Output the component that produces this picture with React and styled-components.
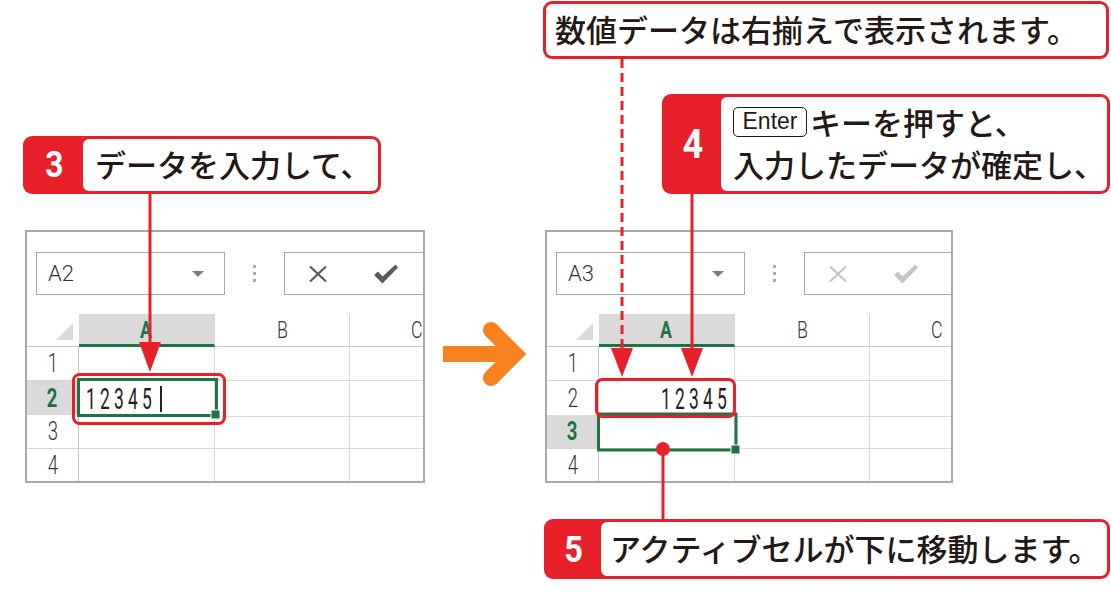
import React from 'react';
import styled, { createGlobalStyle } from 'styled-components';

const RED = '#e8202a';
const GREEN = '#217346';
const INK = '#231815';
const ORANGE = '#f5821f';

const Global = createGlobalStyle`
  html, body { margin: 0; padding: 0; background: #fff; }
  body { font-family: "Noto Sans CJK JP", "Noto Sans", sans-serif; }
`;

const Page = styled.div`
  position: relative;
  width: 1111px;
  height: 601px;
  display: flex;
  overflow: hidden;
  background: #fff;
`;

const LeftCol = styled.div`
  width: 430px;
  flex: none;
  box-sizing: border-box;
  padding: 136px 0 0 23px;
  display: flex;
  flex-direction: column;
  align-items: flex-start;
`;

const ArrowCol = styled.div`
  width: 113px;
  flex: none;
  box-sizing: border-box;
  padding: 322px 0 0 13px;
`;

const RightCol = styled.div`
  width: 568px;
  flex: none;
  box-sizing: border-box;
  padding-top: 1px;
  display: flex;
  flex-direction: column;
  align-items: flex-start;
`;

/* ---------- callouts ---------- */
const Callout = styled.div`
  display: flex;
  align-items: stretch;
  box-sizing: border-box;
  width: ${(p) => p.$w}px;
  height: ${(p) => p.$h}px;
  margin-left: ${(p) => p.$ml || 0}px;
  margin-top: ${(p) => p.$mt || 0}px;
  padding: 3px;
  background: ${RED};
  border-radius: 9px;
  flex: none;
`;

const StepNum = styled.div`
  width: ${(p) => p.$w}px;
  flex: none;
  display: flex;
  align-items: center;
  justify-content: center;
  color: #fff;
  font-family: Roboto, "Liberation Sans", sans-serif;
  font-weight: 700;
  font-size: ${(p) => p.$size}px;
  line-height: 1;
  & > span {
    display: inline-block;
    transform: scaleX(0.88);
  }
`;

const CalloutBody = styled.div`
  flex: 1;
  background: #fff;
  border-radius: 6px;
  display: flex;
  flex-direction: column;
  justify-content: center;
  box-sizing: border-box;
  padding-left: ${(p) => p.$pl}px;
  font-family: "Noto Sans CJK JP", "Noto Sans", sans-serif;
  font-size: 31px;
  font-weight: 500;
  color: ${INK};
  line-height: 42px;
  white-space: nowrap;
  padding-bottom: 2px;
`;

const Line = styled.div`
  display: flex;
  align-items: center;
  height: 42px;
`;

const KeyCap = styled.span`
  display: inline-flex;
  align-items: center;
  justify-content: center;
  box-sizing: border-box;
  width: 74px;
  height: 30px;
  border: 1.5px solid ${INK};
  border-radius: 5px;
  font-family: "Liberation Sans", Arial, sans-serif;
  font-weight: 400;
  font-size: 23px;
  line-height: 1;
  margin-right: 3px;
  padding-bottom: 1px;
`;

/* ---------- spreadsheet ---------- */
const Sheet = styled.div`
  position: relative;
  flex: none;
  box-sizing: border-box;
  width: ${(p) => p.$w}px;
  height: 253px;
  margin-top: 36px;
  margin-left: ${(p) => p.$ml}px;
  border: 2px solid #a8a8a8;
  overflow: hidden;
  background: #fff;
  font-family: Roboto, "Noto Sans", sans-serif;
  font-weight: 300;
  color: #222;
`;

const FormulaBar = styled.div`
  height: 82px;
  box-sizing: border-box;
  padding: 20px 0 0 9px;
  display: flex;
  align-items: flex-start;
`;

const NameBox = styled.div`
  width: 189px;
  height: 43px;
  flex: none;
  box-sizing: border-box;
  border: 1.5px solid #a8a8a8;
  display: flex;
  align-items: center;
  justify-content: space-between;
  padding: 0 20px 0 11px;
  font-size: 22px;
  color: #333;
`;

const DropTri = styled.span`
  width: 0;
  height: 0;
  border-left: 6px solid transparent;
  border-right: 6px solid transparent;
  border-top: 6px solid #7a7a7a;
`;

const Dots = styled.div`
  width: 59px;
  height: 43px;
  flex: none;
  display: flex;
  flex-direction: column;
  align-items: center;
  justify-content: center;
  gap: 4px;
  & > span {
    width: 3px;
    height: 3px;
    background: #a9a9a9;
  }
`;

const FormulaBox = styled.div`
  width: 220px;
  height: 43px;
  flex: none;
  box-sizing: border-box;
  border: 1.5px solid #a8a8a8;
  display: flex;
  align-items: center;
  padding-left: 22px;
  gap: 44px;
  color: ${(p) => (p.$dim ? '#c4c4c4' : '#5a5a5a')};
`;

const GridRow = styled.div`
  display: grid;
  grid-template-columns: 52px 136px 135px 135px;
  height: ${(p) => p.$h}px;
`;

const Corner = styled.div`
  position: relative;
  border-bottom: 1px solid #c8c8c8;
  &::after {
    content: '';
    position: absolute;
    right: 6px;
    bottom: 6px;
    width: 0;
    height: 0;
    border-left: 17px solid transparent;
    border-bottom: 17px solid #d9d9d9;
  }
`;

const ColHead = styled.div`
  display: flex;
  align-items: center;
  justify-content: center;
  box-sizing: border-box;
  background: ${(p) => (p.$active ? '#dadada' : '#fff')};
  border-bottom: ${(p) => (p.$active ? `3px solid ${GREEN}` : '1px solid #c8c8c8')};
  border-right: 1px solid #d6d6d6;
  color: ${(p) => (p.$active ? GREEN : '#333')};
  font-weight: ${(p) => (p.$active ? 700 : 300)};
  font-size: 24px;
  padding-top: ${(p) => (p.$active ? 2 : 0)}px;
`;

const Narrow = styled.span`
  display: inline-block;
  transform: scaleX(0.74);
`;

const RowHead = styled.div`
  display: flex;
  align-items: center;
  justify-content: center;
  box-sizing: border-box;
  background: ${(p) => (p.$active ? '#dadada' : '#fff')};
  border-right: 1px solid #c8c8c8;
  border-bottom: 1px solid #d6d6d6;
  color: ${(p) => (p.$active ? GREEN : '#333')};
  font-weight: ${(p) => (p.$active ? 700 : 300)};
  font-size: 25px;
`;

const Cell = styled.div`
  display: flex;
  align-items: center;
  justify-content: ${(p) => (p.$right ? 'flex-end' : 'flex-start')};
  box-sizing: border-box;
  border-right: 1px solid #d9d9d9;
  border-bottom: 1px solid #d9d9d9;
  padding: 0 5px;
  font-size: 30px;
  font-weight: 400;
  color: #1e1e1e;
`;

const Digit = styled.span`
  display: inline-flex;
  justify-content: center;
  width: 14px;
  transform: scaleX(0.58);
`;

const Caret = styled.span`
  display: inline-block;
  width: 1.5px;
  height: 26px;
  background: #222;
  margin-left: 6px;
`;

const Overlay = styled.svg`
  position: absolute;
  left: 0;
  top: 0;
  pointer-events: none;
`;

const XIcon = () => (
  <svg width="22" height="18" viewBox="0 0 22 18">
    <path d="M3 1.5 L19 16.5 M19 1.5 L3 16.5" stroke="currentColor" strokeWidth="2.2" fill="none" />
  </svg>
);

const CheckIcon = () => (
  <svg width="26" height="22" viewBox="0 0 26 22">
    <polygon points="1,12 5,8.5 9.5,13.5 22.5,1.5 25,4.5 9.5,20.5" fill="currentColor" />
  </svg>
);

const Number = ({ value }) => (
  <>
    {value.split('').map((d, i) => (
      <Digit key={i}>{d}</Digit>
    ))}
  </>
);

function Spreadsheet({ name, width, ml, active, dim, children }) {
  const rows = [1, 2, 3, 4];
  return (
    <Sheet $w={width} $ml={ml}>
      <FormulaBar>
        <NameBox>
          <span>{name}</span>
          <DropTri />
        </NameBox>
        <Dots>
          <span />
          <span />
          <span />
        </Dots>
        <FormulaBox $dim={dim}>
          <XIcon />
          <CheckIcon />
        </FormulaBox>
      </FormulaBar>
      <GridRow $h={33}>
        <Corner />
        <ColHead $active>
          <Narrow>A</Narrow>
        </ColHead>
        <ColHead>
          <Narrow>B</Narrow>
        </ColHead>
        <ColHead>
          <Narrow>C</Narrow>
        </ColHead>
      </GridRow>
      {rows.map((r) => (
        <GridRow key={r} $h={34}>
          <RowHead $active={r === active}>
            <Narrow>{r}</Narrow>
          </RowHead>
          {children(r)}
          <Cell />
          <Cell />
        </GridRow>
      ))}
    </Sheet>
  );
}

export default function App() {
  return (
    <Page>
      <Global />
      <LeftCol>
        <Callout $w={358} $h={58}>
          <StepNum $w={57} $size={36}>
            <span>3</span>
          </StepNum>
          <CalloutBody $pl={12}>データを入力して、</CalloutBody>
        </Callout>
        <Spreadsheet name="A2" width={400} ml={2} active={2}>
          {(r) => (
            <Cell>
              {r === 2 && (
                <>
                  <Number value="12345" />
                  <Caret />
                </>
              )}
            </Cell>
          )}
        </Spreadsheet>
      </LeftCol>

      <ArrowCol>
        <svg width="86" height="64" viewBox="0 0 86 64">
          <rect x="0" y="24" width="70" height="16" fill={ORANGE} />
          <polyline
            points="48,8 72,32 48,56"
            fill="none"
            stroke={ORANGE}
            strokeWidth="16"
            strokeLinecap="round"
            strokeLinejoin="miter"
          />
        </svg>
      </ArrowCol>

      <RightCol>
        <Callout $w={566} $h={58}>
          <CalloutBody $pl={9}>数値データは右揃えで表示されます。</CalloutBody>
        </Callout>
        <Callout $w={448} $h={100} $ml={119} $mt={35}>
          <StepNum $w={56} $size={41}>
            <span>4</span>
          </StepNum>
          <CalloutBody $pl={12}>
            <Line>
              <KeyCap>Enter</KeyCap>キーを押すと、
            </Line>
            <Line>入力したデータが確定し、</Line>
          </CalloutBody>
        </Callout>
        <Spreadsheet name="A3" width={408} ml={2} active={3} dim>
          {(r) => <Cell $right>{r === 2 && <Number value="12345" />}</Cell>}
        </Spreadsheet>
        <Callout $w={566} $h={60} $ml={1} $mt={36}>
          <StepNum $w={54} $size={37}>
            <span>5</span>
          </StepNum>
          <CalloutBody $pl={9}>アクティブセルが下に移動します。</CalloutBody>
        </Callout>
      </RightCol>

      <Overlay width="1111" height="601" viewBox="0 0 1111 601">
        {/* left sheet: active cell and highlight */}
        <rect x="78.5" y="379.5" width="138" height="36" fill="none" stroke={GREEN} strokeWidth="3" />
        <rect x="211" y="410" width="9" height="9" fill={GREEN} stroke="#fff" strokeWidth="1" />
        <rect x="73.5" y="374.5" width="151" height="49" rx="6" fill="none" stroke={RED} strokeWidth="3" />
        {/* right sheet: active cell and highlight */}
        <rect x="598.5" y="414" width="137.5" height="36" fill="none" stroke={GREEN} strokeWidth="3" />
        <rect x="731" y="445" width="9" height="9" fill={GREEN} stroke="#fff" strokeWidth="1" />
        <rect x="596.5" y="379.5" width="138" height="37" rx="6" fill="none" stroke={RED} strokeWidth="3" />

        {/* connector: step 3 */}
        <line x1="150" y1="194" x2="150" y2="345" stroke={RED} strokeWidth="3" />
        <polygon points="139,342 161,342 150,372" fill={RED} />
        {/* connector: note (dashed) */}
        <line x1="622" y1="59" x2="622" y2="348" stroke={RED} strokeWidth="3" strokeDasharray="9 5" />
        <polygon points="611,348 633,348 622,377" fill={RED} />
        {/* connector: step 4 */}
        <line x1="692" y1="194" x2="692" y2="350" stroke={RED} strokeWidth="3" />
        <polygon points="681,348 703,348 692,377" fill={RED} />
        {/* connector: step 5 */}
        <line x1="663" y1="449" x2="663" y2="520" stroke={RED} strokeWidth="3" />
        <circle cx="663" cy="449" r="7" fill={RED} />
      </Overlay>
    </Page>
  );
}
